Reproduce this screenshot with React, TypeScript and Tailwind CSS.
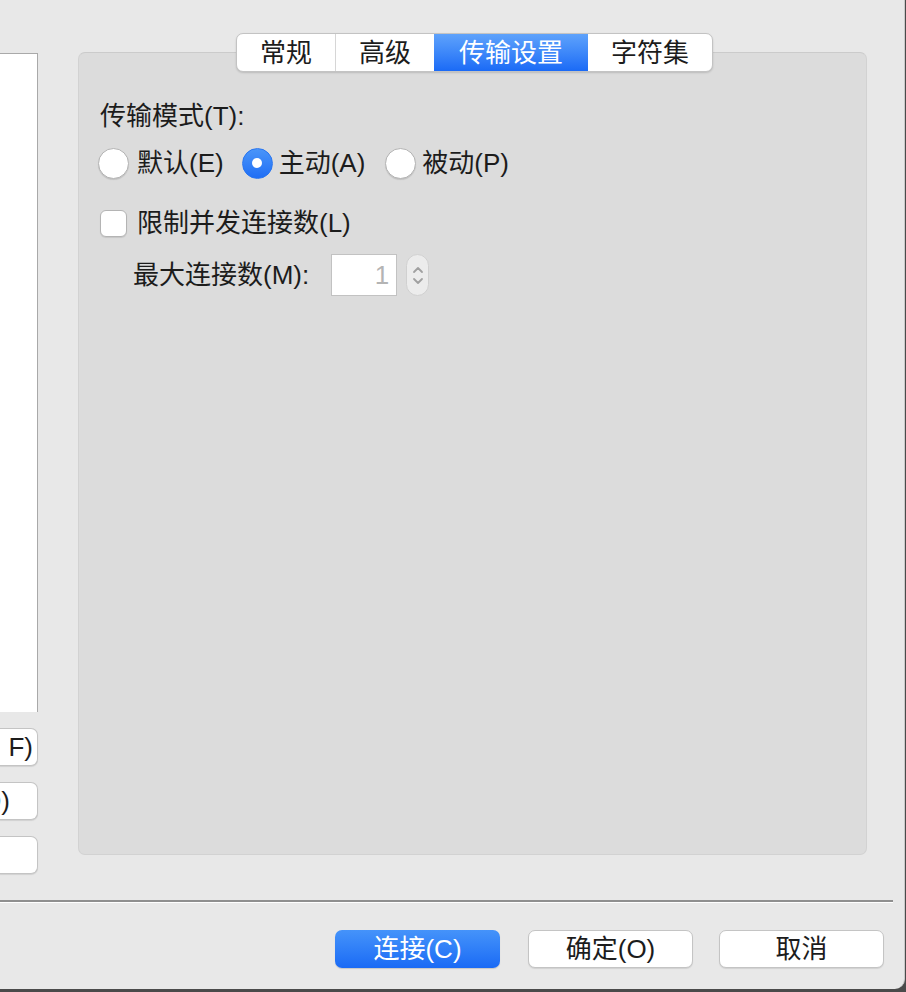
import React from "react";

const font = { fontFamily: '"Liberation Sans", "Noto Sans CJK SC", sans-serif' };

function Radio({ checked }: { checked?: boolean }) {
  if (checked) {
    return (
      <span className="flex h-[31px] w-[31px] shrink-0 items-center justify-center rounded-full border border-[#2a76f0] bg-gradient-to-b from-[#4a95f9] to-[#1f6ef5]">
        <span className="h-[10px] w-[10px] rounded-full bg-white" />
      </span>
    );
  }
  return (
    <span className="h-[31px] w-[31px] shrink-0 rounded-full border border-[#b4b4b4] bg-white shadow-[0_1px_1px_rgba(0,0,0,0.12)]" />
  );
}

export default function App() {
  return (
    <div className="h-[992px] w-[906px] overflow-hidden bg-[#4a4a4a]" style={font}>
      <div className="h-[989px] w-[905px] overflow-hidden rounded-br-[10px] border-r border-[#c9c9c9] bg-[#e8e8e8] text-[26px] leading-[30px] text-[#1c1c1c]">
        {/* top area */}
        <div className="flex h-[900px] items-start pt-[52px]">
          {/* left column (cut off) */}
          <div className="flex w-[38px] shrink-0 flex-col pt-[1px]">
            <div className="h-[659px] border-r border-t border-[#a9a9a9] bg-white" />
            <div className="mt-[16px] flex h-[38px] items-center justify-end overflow-hidden rounded-r-[7px] border border-l-0 border-[#c4c4c4] bg-white pr-[4px] shadow-[0_1px_1px_rgba(0,0,0,0.1)]">
              <span className="whitespace-nowrap">F)</span>
            </div>
            <div className="mt-[16px] flex h-[38px] items-center justify-end overflow-hidden rounded-r-[7px] border border-l-0 border-[#c4c4c4] bg-white pr-[27px] shadow-[0_1px_1px_rgba(0,0,0,0.1)]">
              <span className="whitespace-nowrap">(D)</span>
            </div>
            <div className="mt-[16px] h-[38px] rounded-r-[7px] border border-l-0 border-[#c4c4c4] bg-white shadow-[0_1px_1px_rgba(0,0,0,0.1)]" />
          </div>

          {/* panel */}
          <div className="relative ml-[40px] h-[803px] w-[789px] rounded-[7px] border border-[#d2d2d2] border-t-[#cbcbcb] bg-[#dcdcdc] pl-[21px] pt-[48px]">
            {/* tabs */}
            <div className="absolute left-[157px] top-[-20px] flex h-[39px] overflow-hidden rounded-[7px] border border-[#c3c3c3] bg-white shadow-[0_1px_2px_rgba(0,0,0,0.15)]">
              <div className="flex w-[99px] items-center justify-center border-r border-[#d6d6d6]">常规</div>
              <div className="flex w-[98px] items-center justify-center">高级</div>
              <div className="flex w-[154px] items-center justify-center bg-gradient-to-b from-[#5ea2fb] to-[#1a6af6] text-white">传输设置</div>
              <div className="flex w-[124px] items-center justify-center">字符集</div>
            </div>

            <div className="h-[30px]">传输模式(T):</div>

            <div className="mt-[16px] flex h-[32px] items-center">
              <div className="-ml-[2px] flex items-center">
                <Radio />
                <span className="ml-[8px]">默认(E)</span>
              </div>
              <div className="ml-[18px] flex items-center">
                <Radio checked />
                <span className="ml-[6px]">主动(A)</span>
              </div>
              <div className="ml-[20px] flex items-center">
                <Radio />
                <span className="ml-[6px]">被动(P)</span>
              </div>
            </div>

            <div className="mt-[29px] flex h-[30px] items-center">
              <span className="h-[27px] w-[27px] rounded-[6px] border border-[#b4b4b4] bg-white shadow-[0_1px_1px_rgba(0,0,0,0.1)]" />
              <span className="ml-[10px]">限制并发连接数(L)</span>
            </div>

            <div className="mt-[16px] flex h-[42px] items-center pl-[33px]">
              <span>最大连接数(M):</span>
              <div className="ml-[22px] flex h-[42px] w-[66px] items-center justify-end border border-[#c2c2c2] bg-white pr-[7px] text-[#b4b4b4]">
                1
              </div>
              <div className="ml-[9px] flex h-[42px] w-[23px] flex-col items-center justify-center rounded-full border border-[#d0d0d0] bg-[#ececec]">
                <svg width="12" height="8" viewBox="0 0 12 8" className="mb-[3px]">
                  <path d="M2 6 L6 2 L10 6" fill="none" stroke="#a0a0a0" strokeWidth="1.8" strokeLinecap="round" strokeLinejoin="round" />
                </svg>
                <svg width="12" height="8" viewBox="0 0 12 8">
                  <path d="M2 2 L6 6 L10 2" fill="none" stroke="#a0a0a0" strokeWidth="1.8" strokeLinecap="round" strokeLinejoin="round" />
                </svg>
              </div>
            </div>
          </div>
        </div>

        {/* separator */}
        <div className="h-[2px] w-[893px] bg-[#8f8f8f]" />
        <div className="h-[1px] w-[893px] bg-white" />

        {/* buttons */}
        <div className="mt-[27px] flex justify-end pr-[20px]">
          <div className="flex h-[38px] w-[165px] items-center justify-center rounded-[7px] bg-gradient-to-b from-[#4593fa] to-[#1a6af5] text-white shadow-[0_1px_1px_rgba(0,0,0,0.15)]">
            连接(C)
          </div>
          <div className="ml-[28px] flex h-[38px] w-[165px] items-center justify-center rounded-[7px] border border-[#c4c4c4] bg-white shadow-[0_1px_1px_rgba(0,0,0,0.1)]">
            确定(O)
          </div>
          <div className="ml-[26px] flex h-[38px] w-[165px] items-center justify-center rounded-[7px] border border-[#c4c4c4] bg-white shadow-[0_1px_1px_rgba(0,0,0,0.1)]">
            取消
          </div>
        </div>
      </div>
    </div>
  );
}
